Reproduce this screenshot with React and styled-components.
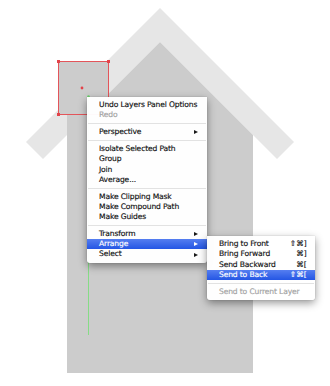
import styled, { createGlobalStyle } from "styled-components";

const GlobalStyle = createGlobalStyle`
  html, body {
    margin: 0;
    padding: 0;
    background: #ffffff;
  }
`;

const Canvas = styled.div`
  position: relative;
  width: 330px;
  height: 386px;
  overflow: hidden;
  background: #ffffff;
  font-family: "DejaVu Sans", "Liberation Sans", sans-serif;
`;

const Drawing = styled.svg`
  display: block;
`;

const Menu = styled.ul`
  position: absolute;
  left: ${(p) => p.$left}px;
  top: ${(p) => p.$top}px;
  width: ${(p) => p.$width}px;
  margin: 0;
  padding: 3px 0;
  list-style: none;
  background: rgba(255, 255, 255, 0.97);
  border-radius: 0 0 3px 3px;
  box-shadow: 0 3px 9px rgba(0, 0, 0, 0.42), 0 0 1px rgba(0, 0, 0, 0.35);
  z-index: ${(p) => p.$z || 1};
`;

const Item = styled.li`
  position: relative;
  display: flex;
  align-items: center;
  justify-content: space-between;
  height: 10.2px;
  padding: 0 8px 0 12px;
  font-size: 7.6px;
  letter-spacing: -0.15px;
  line-height: 10.2px;
  white-space: nowrap;
  -webkit-text-stroke: 0.15px currentColor;
  color: ${(p) => (p.$active ? "#ffffff" : p.$disabled ? "#a2a2a2" : "#111111")};
  background: ${(p) =>
    p.$active ? "linear-gradient(#557ef0, #2456e4)" : "transparent"};
`;

const Separator = styled.li`
  height: 1px;
  margin: 3px 1px 2.8px;
  background: #e2e2e2;
`;

const Arrow = styled.span`
  width: 0;
  height: 0;
  margin-right: 1px;
  border-top: 2.5px solid transparent;
  border-bottom: 2.5px solid transparent;
  border-left: 4px solid ${(p) => (p.$active ? "#ffffff" : "#1a1a1a")};
`;

const Shortcut = styled.span`
  font-size: 7.5px;
  letter-spacing: 0.2px;
`;

const House = () => (
  <Drawing width="330" height="386" viewBox="0 0 330 386">
    <polygon
      points="160,8 294,142 277,159 160,42 43,159 26,142"
      fill="#e6e6e6"
    />
    <polygon points="160,42 253,135 253,373 67,373 67,135" fill="#cccccc" />
    <rect x="67" y="110" width="30" height="30" fill="#cccccc" />
    <rect x="58" y="61" width="50" height="53" fill="#cccccc" />
    <rect
      x="58.5"
      y="61.5"
      width="50"
      height="53"
      fill="none"
      stroke="#e3555a"
      strokeWidth="1"
    />
    <rect x="57" y="60" width="3" height="3" fill="#e3434a" />
    <rect x="107" y="60" width="3" height="3" fill="#e3434a" />
    <rect x="57" y="113" width="3" height="3" fill="#e3434a" />
    <rect x="107" y="113" width="3" height="3" fill="#e3434a" />
    <circle cx="82" cy="88" r="1.4" fill="#e3434a" />
    <line x1="88.5" y1="96" x2="88.5" y2="335" stroke="#86dc86" strokeWidth="1" />
    <circle cx="88.5" cy="96.5" r="1.3" fill="#6fd46f" />
  </Drawing>
);

const arrangeItems = [
  { label: "Bring to Front", key: "⇧⌘]" },
  { label: "Bring Forward", key: "⌘]" },
  { label: "Send Backward", key: "⌘[" },
  { label: "Send to Back", key: "⇧⌘[", active: true },
];

const SubMenu = () => (
  <Menu $left={120} $top={-3} $width={108} $z={2}>
    {arrangeItems.map((it) => (
      <Item key={it.label} $active={it.active}>
        <span>{it.label}</span>
        <Shortcut>{it.key}</Shortcut>
      </Item>
    ))}
    <Separator />
    <Item $disabled>
      <span>Send to Current Layer</span>
    </Item>
  </Menu>
);

const App = () => {
  return (
    <Canvas>
      <GlobalStyle />
      <House />
      <Menu $left={87} $top={97} $width={120}>
        <Item>Undo Layers Panel Options</Item>
        <Item $disabled>Redo</Item>
        <Separator />
        <Item>
          <span>Perspective</span>
          <Arrow />
        </Item>
        <Separator />
        <Item>Isolate Selected Path</Item>
        <Item>Group</Item>
        <Item>Join</Item>
        <Item>Average...</Item>
        <Separator />
        <Item>Make Clipping Mask</Item>
        <Item>Make Compound Path</Item>
        <Item>Make Guides</Item>
        <Separator />
        <Item>
          <span>Transform</span>
          <Arrow />
        </Item>
        <Item $active>
          <span>Arrange</span>
          <Arrow $active />
          <SubMenu />
        </Item>
        <Item>
          <span>Select</span>
          <Arrow />
        </Item>
      </Menu>
    </Canvas>
  );
};

export default App;
